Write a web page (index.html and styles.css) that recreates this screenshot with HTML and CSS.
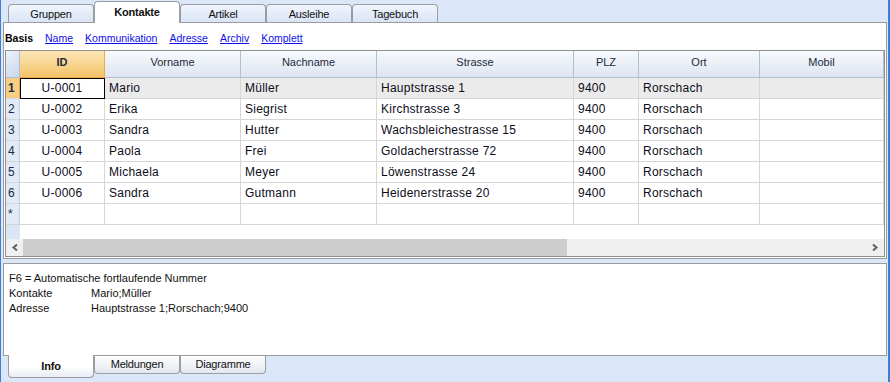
FILE: index.html
```html
<!DOCTYPE html>
<html>
<head>
    <title>Kontakte</title>
    <link rel="stylesheet" href="styles.css">
</head>
<body>
<div class="window">
    <div class="tabs tabs-top">
        <div class="tab">Gruppen</div>
        <div class="tab active">Kontakte</div>
        <div class="tab">Artikel</div>
        <div class="tab">Ausleihe</div>
        <div class="tab">Tagebuch</div>
    </div>

    <div class="panel main">
        <div class="views">
            <span class="view-current">Basis</span>
            <a href="#">Name</a>
            <a href="#">Kommunikation</a>
            <a href="#">Adresse</a>
            <a href="#">Archiv</a>
            <a href="#">Komplett</a>
        </div>

        <div class="grid">
            <div class="row head">
                <div class="cell corner"></div>
                <div class="cell sel">ID</div>
                <div class="cell">Vorname</div>
                <div class="cell">Nachname</div>
                <div class="cell">Strasse</div>
                <div class="cell">PLZ</div>
                <div class="cell">Ort</div>
                <div class="cell">Mobil</div>
            </div>
            <div class="row current">
                <div class="cell num">1</div>
                <div class="cell id focus">U-0001</div>
                <div class="cell">Mario</div>
                <div class="cell">Müller</div>
                <div class="cell">Hauptstrasse 1</div>
                <div class="cell">9400</div>
                <div class="cell">Rorschach</div>
                <div class="cell"></div>
            </div>
            <div class="row">
                <div class="cell num">2</div>
                <div class="cell id">U-0002</div>
                <div class="cell">Erika</div>
                <div class="cell">Siegrist</div>
                <div class="cell">Kirchstrasse 3</div>
                <div class="cell">9400</div>
                <div class="cell">Rorschach</div>
                <div class="cell"></div>
            </div>
            <div class="row">
                <div class="cell num">3</div>
                <div class="cell id">U-0003</div>
                <div class="cell">Sandra</div>
                <div class="cell">Hutter</div>
                <div class="cell">Wachsbleichestrasse 15</div>
                <div class="cell">9400</div>
                <div class="cell">Rorschach</div>
                <div class="cell"></div>
            </div>
            <div class="row">
                <div class="cell num">4</div>
                <div class="cell id">U-0004</div>
                <div class="cell">Paola</div>
                <div class="cell">Frei</div>
                <div class="cell">Goldacherstrasse 72</div>
                <div class="cell">9400</div>
                <div class="cell">Rorschach</div>
                <div class="cell"></div>
            </div>
            <div class="row">
                <div class="cell num">5</div>
                <div class="cell id">U-0005</div>
                <div class="cell">Michaela</div>
                <div class="cell">Meyer</div>
                <div class="cell">Löwenstrasse 24</div>
                <div class="cell">9400</div>
                <div class="cell">Rorschach</div>
                <div class="cell"></div>
            </div>
            <div class="row">
                <div class="cell num">6</div>
                <div class="cell id">U-0006</div>
                <div class="cell">Sandra</div>
                <div class="cell">Gutmann</div>
                <div class="cell">Heidenerstrasse 20</div>
                <div class="cell">9400</div>
                <div class="cell">Rorschach</div>
                <div class="cell"></div>
            </div>
            <div class="row">
                <div class="cell num">*</div>
                <div class="cell id"></div>
                <div class="cell"></div>
                <div class="cell"></div>
                <div class="cell"></div>
                <div class="cell"></div>
                <div class="cell"></div>
                <div class="cell"></div>
            </div>
            <div class="filler"><div class="filler-head"></div></div>

            <div class="hscroll">
                <div class="scroll-btn">
                    <svg width="17" height="17" viewBox="0 0 17 17"><path d="M11 5.5 L7.5 8.5 L11 11.5" fill="none" stroke="#606060" stroke-width="2"/></svg>
                </div>
                <div class="scroll-track"><div class="scroll-thumb"></div></div>
                <div class="scroll-btn">
                    <svg width="17" height="17" viewBox="0 0 17 17"><path d="M6 5.5 L9.5 8.5 L6 11.5" fill="none" stroke="#606060" stroke-width="2"/></svg>
                </div>
            </div>
        </div>
    </div>

    <div class="panel info">
        <div class="info-line">F6 = Automatische fortlaufende Nummer</div>
        <div class="info-line"><span class="info-label">Kontakte</span>Mario;Müller</div>
        <div class="info-line"><span class="info-label">Adresse</span>Hauptstrasse 1;Rorschach;9400</div>
    </div>

    <div class="tabs tabs-bottom">
        <div class="tab active">Info</div>
        <div class="tab">Meldungen</div>
        <div class="tab">Diagramme</div>
    </div>
</div>
</body>
</html>
```

FILE: styles.css
```css
body {
    margin: 0;
    padding: 0;
    font-family: "Liberation Sans", Arial, sans-serif;
    background-color: #dbe6f8;
}

.window {
    box-sizing: border-box;
    width: 890px;
    height: 382px;
    padding: 0 1px 0 2px;
    border-left: 1px solid #3c80d4;
    border-right: 2px solid #3c80d4;
    background-color: #dbe6f8;
    overflow: hidden;
}

/* Tabs (oben und unten) */
.tabs {
    display: flex;
    padding-left: 5px;
    font-size: 11px;
    letter-spacing: -0.2px;
    color: #111;
}

.tabs-top {
    height: 22px;
    align-items: flex-end;
}

.tab {
    box-sizing: border-box;
    width: 86px;
    text-align: center;
    border: 1px solid #9a9da2;
}

.tabs-top .tab {
    height: 18px;
    line-height: 18px;
    border-bottom: none;
    border-radius: 4px 4px 0 0;
    background: linear-gradient(#f1f5fc, #d9e4f6);
}

.tabs-top .tab.active {
    height: 22px;
    line-height: 21px;
    margin-bottom: -1px;
    background: #fff;
    font-weight: bold;
    position: relative;
    z-index: 2;
}

.tabs-bottom {
    align-items: flex-start;
}

.tabs-bottom .tab {
    height: 18px;
    line-height: 16px;
    border-top: none;
    border-radius: 0 0 4px 4px;
    background: linear-gradient(#fefefe, #e2e8f1);
}

.tabs-bottom .tab.active {
    height: 23px;
    line-height: 22px;
    margin-top: -1px;
    background: linear-gradient(#ffffff 55%, #e6ebf4);
    font-weight: bold;
    position: relative;
    z-index: 2;
}

/* Panels */
.panel {
    box-sizing: border-box;
    width: 884px;
    border: 1px solid #9b9b9b;
    background-color: #fff;
}

.main {
    height: 237px;
}

.info {
    height: 93px;
    margin-top: 4px;
    padding: 7px 5px 0 5px;
    font-size: 11px;
    line-height: 15px;
    color: #111;
}

.info-label {
    display: inline-block;
    width: 82px;
}

/* Ansichten */
.views {
    height: 27px;
    box-sizing: border-box;
    padding: 8px 0 0 1px;
    font-size: 10.5px;
    line-height: 14px;
    display: flex;
    gap: 12px;
}

.view-current {
    font-weight: bold;
    color: #000;
}

.views a {
    color: #1010e8;
    text-decoration: underline;
}

/* Tabelle */
.grid {
    box-sizing: border-box;
    width: 880px;
    height: 207px;
    margin: 0 1px;
    border: 1px solid #8f8f8f;
    display: flex;
    flex-direction: column;
}

.row {
    display: grid;
    grid-template-columns: 14px 85px 136px 136px 197px 65px 121px 124px;
    height: 21px;
    font-size: 12px;
    letter-spacing: 0.25px;
    color: #0d0d1a;
}

.cell {
    box-sizing: border-box;
    border-right: 1px solid #d6d6d6;
    border-bottom: 1px solid #d6d6d6;
    padding-left: 4px;
    line-height: 20px;
    white-space: nowrap;
    overflow: hidden;
}

.cell.id {
    text-align: center;
    padding-left: 0;
}

.cell.num {
    padding-left: 2px;
    background-color: #e2eaf7;
    border-right-color: #c3d0e2;
    color: #1b2b45;
}

.row.head {
    height: 27px;
    font-size: 11px;
    letter-spacing: 0;
    color: #1e2a3a;
}

.row.head .cell {
    padding-left: 0;
    text-align: center;
    line-height: 23px;
    background: linear-gradient(#f8fafd, #dde5f0);
    border-right-color: #aebfd6;
    border-bottom-color: #aebfd6;
}

.row.head .cell.corner {
    background: linear-gradient(135deg, #eef3fa, #c9d6ea);
}

.row.head .cell.sel {
    font-weight: bold;
    background: linear-gradient(#fbe5b6, #f4c46a);
    border-right-color: #f0a848;
    border-bottom-color: #f0a848;
}

.row.current .cell {
    background-color: #ebebeb;
}

.row.current .cell.num {
    background-color: #f6cf84;
    font-weight: bold;
    border-right-color: #f0a848;
}

.row.current .cell.focus {
    background-color: #fff;
    outline: 1px solid #000;
    outline-offset: -1px;
}

.filler {
    height: 14px;
    display: flex;
}

.filler-head {
    width: 14px;
    background-color: #dbe5f6;
}

/* Bildlaufleiste */
.hscroll {
    height: 17px;
    display: flex;
    background-color: #f0f0f0;
}

.scroll-btn {
    width: 17px;
    height: 17px;
}

.scroll-track {
    flex: 1;
}

.scroll-thumb {
    width: 544px;
    height: 17px;
    background-color: #cdcdcd;
}
```
